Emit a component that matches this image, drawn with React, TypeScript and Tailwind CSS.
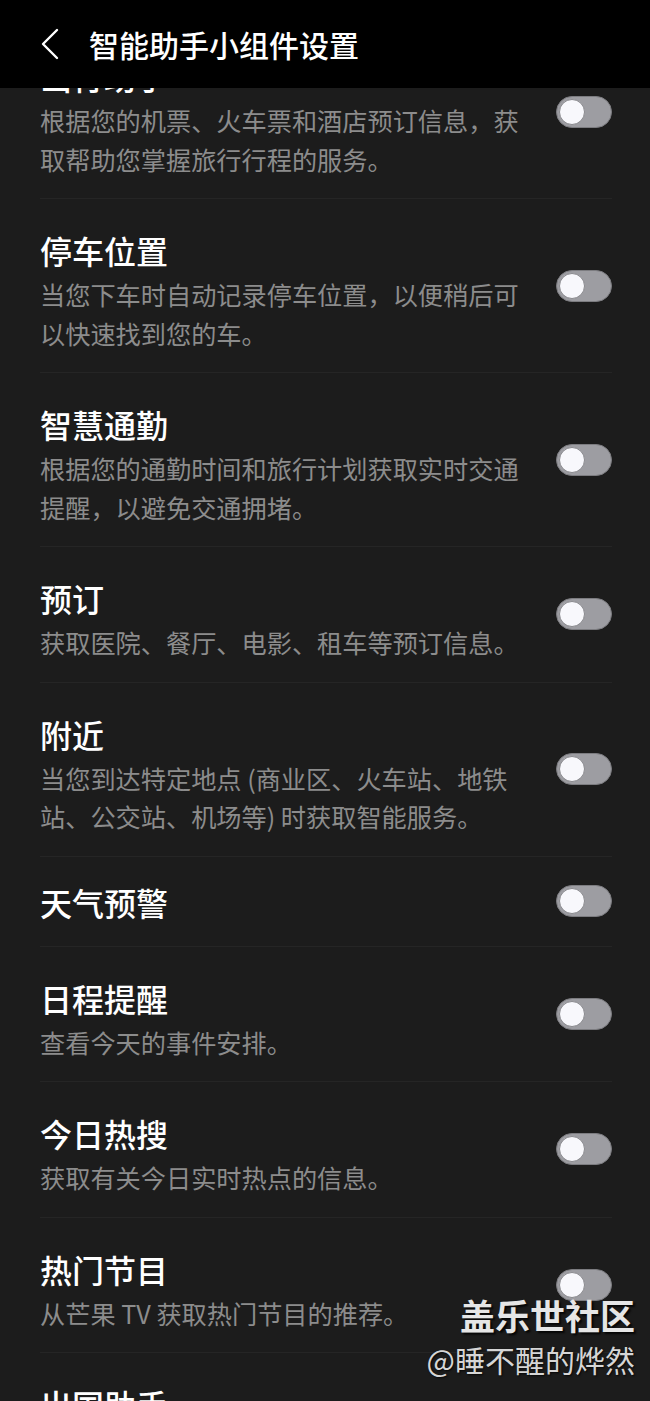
interface SettingItem {
  title: string
  desc?: string
}

const items: SettingItem[] = [
  { title: "出行助手", desc: "根据您的机票、火车票和酒店预订信息，获取帮助您掌握旅行行程的服务。" },
  { title: "停车位置", desc: "当您下车时自动记录停车位置，以便稍后可以快速找到您的车。" },
  { title: "智慧通勤", desc: "根据您的通勤时间和旅行计划获取实时交通提醒，以避免交通拥堵。" },
  { title: "预订", desc: "获取医院、餐厅、电影、租车等预订信息。" },
  { title: "附近", desc: "当您到达特定地点 (商业区、火车站、地铁站、公交站、机场等) 时获取智能服务。" },
  { title: "天气预警" },
  { title: "日程提醒", desc: "查看今天的事件安排。" },
  { title: "今日热搜", desc: "获取有关今日实时热点的信息。" },
  { title: "热门节目", desc: "从芒果 TV 获取热门节目的推荐。" },
  { title: "出国助手", desc: "获取出国旅行相关的实用信息。" },
]

function Toggle() {
  return (
    <div className="w-[56px] h-[32px] shrink-0 rounded-full bg-[#9d9da2] border border-[#7c7c80] flex items-center px-[2px]">
      <div className="w-[26px] h-[26px] rounded-full bg-[#f8f8fc] border border-[#8a8a8e]" />
    </div>
  )
}

function SettingRow({ title, desc }: SettingItem) {
  return (
    <div className="ml-10 mr-[38px] flex items-center justify-between border-b border-[#252525]">
      <div className={desc ? "w-[482px] pt-[31px] pb-[20px]" : "w-[482px] pt-[25px] pb-[24px]"}>
        <div className="text-[32px] leading-[40px] font-medium text-white">{title}</div>
        {desc && (
          <p className="mt-[5px] text-[25.2px] leading-[38.5px] text-[#8c8c8c]">{desc}</p>
        )}
      </div>
      <Toggle />
    </div>
  )
}

export default function App() {
  return (
    <div
      className="relative w-[650px] h-[1401px] overflow-hidden bg-[#1c1c1c] flex flex-col"
      style={{ fontFamily: '"Noto Sans CJK SC", "Noto Sans", sans-serif' }}
    >
      <header className="h-[88px] shrink-0 bg-black flex items-center z-10">
        <svg className="ml-[40px] w-[20px] h-[32px] text-white" viewBox="0 0 20 32" fill="none">
          <polyline points="17,2 3,16 17,30" stroke="currentColor" strokeWidth="2.4" strokeLinecap="round" strokeLinejoin="round" />
        </svg>
        <h1 className="ml-[29px] text-[30px] font-medium text-white">智能助手小组件设置</h1>
      </header>
      <div className="flex-1 overflow-hidden">
        <div className="-mt-[63px]">
          {items.map((item) => (
            <SettingRow key={item.title} title={item.title} desc={item.desc} />
          ))}
        </div>
      </div>
      <div className="absolute top-[1292px] right-[15px] text-right z-20">
        <div className="text-[35px] leading-[46px] font-bold text-[#e6e6e6] [text-shadow:2px_2px_2px_rgba(0,0,0,0.8)]">
          盖乐世社区
        </div>
        <div className="text-[30px] leading-[42px] text-[#d6d6d6] [text-shadow:1px_1px_2px_rgba(0,0,0,0.8)]">
          @睡不醒的烨然
        </div>
      </div>
    </div>
  )
}
